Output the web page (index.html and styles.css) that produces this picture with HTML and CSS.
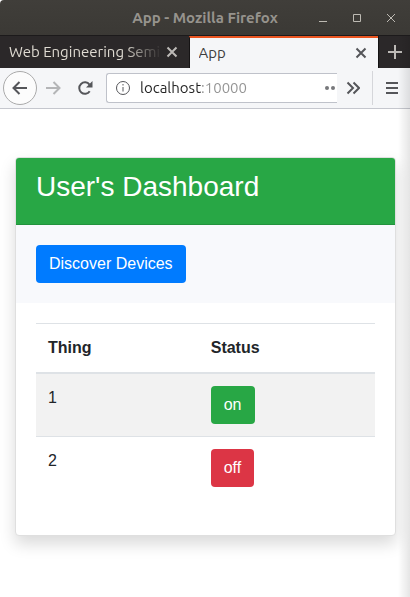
FILE: index.html
```html
<!DOCTYPE html>
<html lang="en">
<head>
  <meta charset="utf-8">
  <meta name="viewport" content="width=device-width, initial-scale=1">
  <title>App</title>
  <link rel="stylesheet" href="styles.css">
</head>
<body>
  <div class="window">
    <header class="titlebar">
      <span class="titlebar-text">App - Mozilla Firefox</span>
      <div class="window-controls">
        <button class="icon-button" type="button" aria-label="Minimize">
          <svg width="10" height="10" viewBox="0 0 10 10"><path d="M1 8.5h8"/></svg>
        </button>
        <button class="icon-button" type="button" aria-label="Maximize">
          <svg width="10" height="10" viewBox="0 0 10 10"><path d="M1.5 1.5h7v7h-7z"/></svg>
        </button>
        <button class="icon-button" type="button" aria-label="Close window">
          <svg width="10" height="10" viewBox="0 0 10 10"><path d="M1 1l8 8M9 1l-8 8"/></svg>
        </button>
      </div>
    </header>

    <nav class="tabs" aria-label="Tabs">
      <div class="tab">
        <a class="tab-title tab-title-faded" href="#">Web Engineering Semin</a>
        <button class="icon-button tab-close" type="button" aria-label="Close tab">
          <svg width="12" height="12" viewBox="0 0 12 12"><path d="M1.500 1.500l9 9M10.500 1.500l-9 9"/></svg>
        </button>
      </div>
      <div class="tab tab-active">
        <a class="tab-title" href="#">App</a>
        <button class="icon-button tab-close" type="button" aria-label="Close tab">
          <svg width="12" height="12" viewBox="0 0 12 12"><path d="M1.500 1.500l9 9M10.500 1.500l-9 9"/></svg>
        </button>
      </div>
      <button class="icon-button new-tab" type="button" aria-label="New tab">
        <svg width="14" height="14" viewBox="0 0 14 14"><path d="M7 0v14M0 7h14"/></svg>
      </button>
    </nav>

    <div class="toolbar">
      <button class="icon-button back" type="button" aria-label="Back">
        <svg width="16" height="16" viewBox="0 0 16 16"><path d="M15 8H1.5M7.5 2l-6 6 6 6"/></svg>
      </button>
      <button class="icon-button forward" type="button" aria-label="Forward" disabled>
        <svg width="16" height="16" viewBox="0 0 16 16"><path d="M1 8h13.500M8.500 2l6 6-6 6"/></svg>
      </button>
      <button class="icon-button reload" type="button" aria-label="Reload">
        <svg width="16" height="16" viewBox="0 0 16 16"><path d="M12.700 11.200A5.700 5.700 0 1 1 12.500 4.600"/><path class="solid" d="M15.500 1v6.500H9z"/></svg>
      </button>
      <div class="address">
        <svg class="info" width="16" height="16" viewBox="0 0 16 16"><circle cx="8" cy="8" r="6.500"/><path d="M8 7v4.500M8 4v1.500"/></svg>
        <input class="address-input" type="text" value="localhost:10000" aria-label="Address">
        <button class="icon-button page-actions" type="button" aria-label="Page actions">
          <svg width="12" height="16" viewBox="0 0 12 16"><circle cx="2" cy="8" r="2"/><circle cx="8" cy="8" r="2"/></svg>
        </button>
      </div>
      <button class="icon-button overflow" type="button" aria-label="More tools">
        <svg width="14" height="14" viewBox="0 0 14 14"><path d="M1.500 1.500L7 7l-5.500 5.500M7.500 1.500L13 7l-5.500 5.500"/></svg>
      </button>
      <button class="icon-button menu" type="button" aria-label="Menu">
        <svg width="12" height="12" viewBox="0 0 12 12"><path d="M0 1h12M0 6h12M0 11h12"/></svg>
      </button>
    </div>

    <main class="page">
      <section class="card">
        <div class="card-header"><h1 class="card-title">User's Dashboard</h1></div>
        <div class="card-body card-actions">
          <button class="btn btn-primary" type="button">Discover Devices</button>
        </div>
        <div class="card-body">
          <table class="table">
            <thead>
              <tr><th scope="col">Thing</th><th scope="col">Status</th></tr>
            </thead>
            <tbody>
              <tr><td>1</td><td><button class="btn btn-success" type="button">on</button></td></tr>
              <tr><td>2</td><td><button class="btn btn-danger" type="button">off</button></td></tr>
            </tbody>
          </table>
        </div>
      </section>
    </main>
  </div>
</body>
</html>
```
FILE: styles.css
```css
* {
  box-sizing: border-box;
}

body {
  margin: 0;
  background: #fff;
  color: #212529;
  font: 16px/24px "Liberation Sans", Arial, sans-serif;
}

.window {
  position: relative;
  display: flex;
  flex-direction: column;
  min-height: 100vh;
}

/* Soft shade along the right edge, below the title bar */
.window::after {
  content: "";
  position: absolute;
  top: 36px;
  right: 0;
  bottom: 0;
  width: 12px;
  background: linear-gradient(to right, rgba(0, 0, 0, 0), rgba(0, 0, 0, 0.1));
  pointer-events: none;
}

.titlebar,
.tabs,
.toolbar {
  font-family: Ubuntu, "Noto Sans", sans-serif;
  font-size: 15px;
}

.icon-button {
  display: flex;
  align-items: center;
  justify-content: center;
  flex: none;
  padding: 0;
  border: 0;
  background: none;
  color: inherit;
}

.icon-button svg,
.info {
  fill: none;
  stroke: currentColor;
  stroke-width: 2;
}

.titlebar {
  display: grid;
  grid-template-columns: 1fr auto 1fr;
  align-items: center;
  height: 35px;
  background: linear-gradient(#403e3a, #3b3935);
  color: #96938d;
  border-top-left-radius: 4px;
}

.titlebar-text {
  grid-column: 2;
  font-weight: 700;
}

.window-controls {
  display: flex;
  justify-content: flex-end;
  gap: 24px;
  padding-right: 14px;
  color: #bdbab3;
}

.window-controls .icon-button svg {
  stroke-width: 1;
}

.tabs {
  display: flex;
  height: 33px;
  background: #2b2829;
  border-top: 1px solid #1c1a1b;
  color: #dfdbd2;
}

.tab {
  display: flex;
  flex: 1;
  align-items: center;
  min-width: 0;
  padding: 0 11px 0 9px;
}

.tab-active {
  border-top: 2px solid #e95420;
  border-left: 1px solid #151314;
  background: #f5f6f8;
  color: #3c3c3c;
}

.tab-title {
  flex: 1;
  overflow: hidden;
  color: inherit;
  text-decoration: none;
  white-space: nowrap;
}

.tab-title-faded {
  mask-image: linear-gradient(to right, #000 75%, transparent);
}

.tab-close {
  width: 12px;
  margin-left: 4px;
  color: #bdbab7;
}

.tab-active .tab-close {
  color: #55565a;
}

.new-tab {
  width: 32px;
  border-left: 1px solid #151314;
  color: #bdbab7;
}

.toolbar {
  display: flex;
  align-items: center;
  height: 41px;
  padding-left: 3px;
  border-bottom: 1px solid #c5c7ce;
  background: #f5f6f8;
  color: #55565a;
}

.back {
  width: 34px;
  height: 34px;
  border: 1px solid #aaa;
  border-radius: 50%;
  background: #fcfcfc;
}

.forward {
  width: 32px;
  color: #b4b5b7;
}

.reload {
  width: 32px;
}

.icon-button .solid {
  fill: currentColor;
  stroke: none;
}

.address {
  display: flex;
  flex: 1;
  align-items: center;
  min-width: 0;
  height: 30px;
  margin-left: 5px;
  padding-left: 8px;
  border: 1px solid #bfc2ca;
  border-right: 0;
  border-radius: 3px 0 0 3px;
  background: #fff;
}

.info {
  flex: none;
  stroke-width: 1;
}

/* The host is dark and the port is grey */
.address-input {
  flex: 1;
  min-width: 0;
  padding: 0;
  margin-left: 9px;
  border: 0;
  outline: 0;
  background: linear-gradient(to right, #222 62px, #929292 62px);
  background-clip: text;
  -webkit-text-fill-color: transparent;
  font: inherit;
}

.page-actions svg {
  fill: #77787b;
  stroke: none;
}

.overflow {
  width: 35px;
  padding-right: 4px;
}

.menu {
  align-self: stretch;
  width: 38px;
  margin: 3px 0;
  border-left: 1px solid #d5d6da;
}

.page {
  flex: 1;
  padding: 48px 14px 60px 15px;
}

.card {
  border: 1px solid #dfdfdf;
  border-radius: 4px;
  background: #fff;
  box-shadow: 0 8px 16px rgba(0, 0, 0, 0.15);
}

.card-header {
  padding: 12px 20px 20px;
  border-bottom: 1px solid #23923d;
  border-radius: 3px 3px 0 0;
  background: #28a745;
  color: #fff;
}

.card-title {
  margin: 0;
  font-size: 28px;
  font-weight: 400;
  line-height: 34px;
}

.card-body {
  padding: 20px;
}

.card-actions {
  background: #f8f9fc;
}

.btn {
  display: block;
  padding: 6px 12px;
  border: 1px solid transparent;
  border-radius: 4px;
  color: #fff;
  font: inherit;
}

.btn-primary {
  background: #007bff;
}

.btn-success {
  background: #28a745;
}

.btn-danger {
  background: #dc3545;
}

.table {
  width: 100%;
  margin-bottom: 16px;
  border-collapse: collapse;
}

.table th,
.table td {
  padding: 12px;
  border-top: 1px solid #dee2e6;
  text-align: left;
  vertical-align: top;
}

.table th {
  border-bottom: 2px solid #dee2e6;
}

.table th:first-child {
  width: 48%;
}

.table tbody tr:nth-child(odd) {
  background: #f2f2f2;
}
```
